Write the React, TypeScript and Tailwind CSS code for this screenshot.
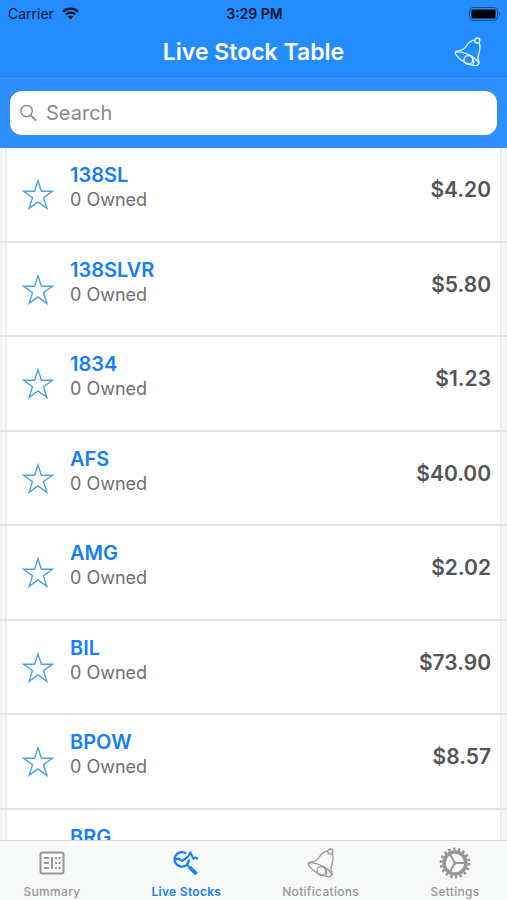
import type { ReactNode } from "react"

const stocks = [
  { symbol: "138SL", owned: 0, price: "$4.20" },
  { symbol: "138SLVR", owned: 0, price: "$5.80" },
  { symbol: "1834", owned: 0, price: "$1.23" },
  { symbol: "AFS", owned: 0, price: "$40.00" },
  { symbol: "AMG", owned: 0, price: "$2.02" },
  { symbol: "BIL", owned: 0, price: "$73.90" },
  { symbol: "BPOW", owned: 0, price: "$8.57" },
  { symbol: "BRG", owned: 0, price: "$3.15" },
]

function WifiIcon() {
  return (
    <svg width="17" height="13" viewBox="0 0 17 13" fill="none" stroke="#06162b" strokeWidth="2.3">
      <path d="M1 4.6C5.2 .6 11.8 .6 16 4.6" />
      <path d="M3.7 7.4C6.4 4.9 10.6 4.9 13.3 7.4" />
      <path d="M8.5 12.4 5.7 9.6C7.2 8.2 9.8 8.2 11.3 9.6Z" fill="#06162b" stroke="none" />
    </svg>
  )
}

function BatteryIcon() {
  return (
    <svg width="32" height="14" viewBox="0 0 32 14" fill="none">
      <rect x="0.5" y="0.5" width="28" height="13" rx="3.5" stroke="#125091" />
      <rect x="2.5" y="2.5" width="24" height="9" rx="1" fill="#000" />
      <path d="M30 5v4c1.5-.5 1.5-3.5 0-4Z" fill="#125091" />
    </svg>
  )
}

function BellIcon() {
  return (
    <svg width="30" height="30" viewBox="0 0 30 30" fill="none" stroke="currentColor" strokeWidth="1.3" strokeLinejoin="round">
      <circle cx="24.3" cy="3.6" r="2.6" />
      <path d="M21.7 3.2C17 3.5 14.5 6.8 13 9.5C11 13 8 13.6 4 14.1C1.8 14.5 1.8 16.2 3.5 18.4C6.5 22.2 12 26 17 27.7C21 29 25 28.7 26 26.7C26.5 24.7 25 23 25 20.5C25 17 28.6 13 26.3 5.6" />
      <path d="M2.6 15.2C6 13.7 16.5 17 21 20.7C24 23.2 25.5 25 26 26.7" />
      <circle cx="15.3" cy="23" r="4.4" />
      <path d="M18.3 19.8C21 21.8 21.6 25.5 19.6 28.2" />
    </svg>
  )
}

function SummaryIcon() {
  return (
    <svg width="26" height="24" viewBox="0 0 26 24" fill="none" stroke="currentColor" strokeWidth="2">
      <rect x="1.5" y="1.5" width="23" height="21" rx="2" />
      <path d="M13 6v12" />
      <path d="M5 7h5M5 12h5M5 17h5" />
      <path d="M16 7h2M16 12h2M16 17h2M19.500 7h2M19.500 12h2M19.500 17h2" strokeWidth="1.8" />
    </svg>
  )
}

function LiveIcon() {
  return (
    <svg width="26" height="26" viewBox="0 0 26 26" fill="none" stroke="currentColor" strokeWidth="2.2" strokeLinejoin="round">
      <path d="M13.2 3.7A7.2 7.2 0 1 0 16 9.500" />
      <path d="M1.500 9.300L5.800 8.600L8.800 11L12.500 8.600C15 7.500 16 5 17.300 2.500L20.500 8.700L22 7.500L25 8.700" />
      <path d="M13.800 14.500L16.500 17.200" />
      <path d="M16.500 17.200L23.500 24" strokeWidth="3.800" />
    </svg>
  )
}

function GearIcon() {
  return (
    <svg width="32" height="32" viewBox="0 0 32 32" fill="none" stroke="currentColor">
      <circle cx="16" cy="16" r="11" strokeWidth="3.6" />
      <circle cx="16" cy="16" r="14" strokeWidth="2.8" strokeDasharray="2.5 2.387" />
      <path d="M16 16H27M16 16L10.5 6.5M16 16L10.5 25.5" strokeWidth="2" />
      <circle cx="16" cy="16" r="1.8" fill="currentColor" stroke="none" />
    </svg>
  )
}

function TabButton({ label, active, children }: { label: string; active?: boolean; children: ReactNode }) {
  return (
    <button
      type="button"
      className={`flex w-[88px] flex-col items-center text-[12px] leading-4 tracking-wide ${active ? "font-semibold text-[#147efb]" : "font-medium text-[#979797]"}`}
    >
      <span className="flex h-[43px] items-center justify-center">{children}</span>
      {label}
    </button>
  )
}

function App() {
  return (
    <div className="flex h-screen flex-col overflow-hidden bg-white font-['Inter',sans-serif]">

      {/* Header */}
      <header className="shrink-0 bg-[#248cff]">
        <div className="grid h-[27px] grid-cols-[1fr_auto_1fr] items-center pr-[6px] pl-2 text-[14px] text-[#06162b]">
          <div className="flex items-center gap-2">
            Carrier
            <WifiIcon />
          </div>
          <div className="font-semibold">3:29 PM</div>
          <div className="flex justify-end">
            <BatteryIcon />
          </div>
        </div>

        <div className="grid h-[51px] grid-cols-[1fr_auto_1fr] items-center px-6 pb-[2px]">
          <h1 className="col-start-2 text-[23px] leading-7 font-semibold text-white">Live Stock Table</h1>
          <button type="button" aria-label="Notifications" className="justify-self-end text-white/90">
            <BellIcon />
          </button>
        </div>
      </header>

      {/* Search */}
      <div className="h-[70px] shrink-0 border-t border-[#3c98ff] bg-[#2e90ff] px-[10px] pt-3">
        <label className="flex h-[44px] items-center gap-[9px] rounded-xl bg-white pl-[10px]">
          <svg width="18" height="18" viewBox="0 0 18 18" fill="none" stroke="#8a8a8e" strokeWidth="1.5">
            <circle cx="7" cy="7" r="6" />
            <path d="M11.3 11.3L17 17" strokeWidth="2" />
          </svg>
          <input
            type="text"
            aria-label="Search"
            placeholder="Search"
            className="w-full bg-transparent text-[20px] outline-none placeholder:text-[#8a8a8e]"
          />
        </label>
      </div>

      {/* Stock list */}
      <ul className="min-h-0 flex-1 overflow-y-auto [scrollbar-width:none]">
        {stocks.map((stock) => (
          <li
            key={stock.symbol}
            className="flex h-[94px] border-b-2 border-[#e3e3e3] bg-[#fafafa] odd:h-[95px]"
          >
            <div className="flex flex-1 border-x-2 border-[#f3f3f3] px-[3px]">
              <div className="flex flex-1 items-start border-x-2 border-[#eeeeee] bg-white pr-[9px] pl-[15px]">
                <button type="button" aria-label={`Add ${stock.symbol} to favourites`} className="mt-[31px] text-[#4ba3e3]">
                  <svg width="32" height="32" viewBox="0 0 32 32" fill="none" stroke="currentColor" strokeWidth="1.4">
                    <path d="M16 1.8L19.4 12.3H30.3L21.5 18.8L24.9 29.4L16 22.9L7.1 29.4L10.5 18.8L1.7 12.3H12.6Z" />
                  </svg>
                </button>
                <div className="ml-4 flex flex-col gap-px pt-[15px]">
                  <h2 className="text-[20px] leading-6 font-semibold text-[#147efb]">{stock.symbol}</h2>
                  <p className="text-[18px] leading-6 text-[#707070]">{stock.owned} Owned</p>
                </div>
                <p className="ml-auto pt-7 text-[21px] leading-7 font-semibold text-[#555]">{stock.price}</p>
              </div>
            </div>
          </li>
        ))}
      </ul>

      {/* Tab bar */}
      <nav className="flex h-[60px] shrink-0 justify-between border-t border-[#d4d4d4] bg-[#f8f9f9] px-2">
        <TabButton label="Summary"><SummaryIcon /></TabButton>
        <TabButton label="Live Stocks" active><LiveIcon /></TabButton>
        <TabButton label="Notifications"><BellIcon /></TabButton>
        <TabButton label="Settings"><GearIcon /></TabButton>
      </nav>

    </div>
  )
}

export default App
